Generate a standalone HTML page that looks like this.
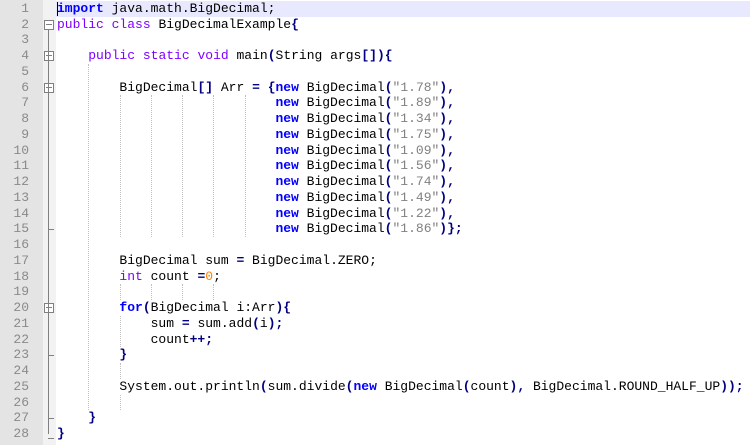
<!DOCTYPE html>
<html><head><style>
body{margin:0;width:750px;height:445px;overflow:hidden;background:#fff;position:relative;font-family:"Liberation Mono",monospace;font-size:13px;}
#nums{position:absolute;left:0;top:0;width:43px;height:445px;background:#e4e4e4;}
#fold{position:absolute;left:43px;top:0;width:13px;height:445px;background:#f2f2f2;}
.ln{position:absolute;left:0;width:29px;text-align:right;color:#8a8a8a;font-size:13px;line-height:15.74px;font-family:"Liberation Mono",monospace;}
.l{position:absolute;left:57px;white-space:pre;line-height:15.74px;color:#000;}
.k{color:#0000ff;font-weight:bold}
.t{color:#8000ff}
.s{color:#808080}
.n{color:#ff8000}
.o{color:#000080;font-weight:bold}
.box{position:absolute;left:44px;width:8px;height:8px;border:1px solid #808080;background:#fff;}
.box:after{content:"";position:absolute;left:1px;top:3px;width:6px;height:1px;background:#808080;}
.vl{position:absolute;left:48px;width:1px;background:#808080;}
.hl{position:absolute;left:48px;width:6px;height:1px;background:#808080;}
.g{position:absolute;width:0;border-left:1px dotted #c0c0c0;}
</style></head><body>
<div id="nums"></div><div id="fold"></div>
<div style="position:absolute;left:56px;top:1px;width:694px;height:16px;background:#e8e8ff"></div>
<div style="position:absolute;left:57px;top:2px;width:1px;height:14px;background:#000"></div>
<div id="c"></div>
<script>
var lines=[
'<span class="k">import</span> java.math.BigDecimal;',
'<span class="t">public</span> <span class="t">class</span> BigDecimalExample<span class="o">{</span>',
'',
'    <span class="t">public</span> <span class="t">static</span> <span class="t">void</span> main<span class="o">(</span>String args<span class="o">[])</span><span class="o">{</span>',
'',
'        BigDecimal<span class="o">[]</span> Arr <span class="o">=</span> <span class="o">{</span><span class="k">new</span> BigDecimal<span class="o">(</span><span class="s">"1.78"</span><span class="o">),</span>'];
var v=["1.89","1.34","1.75","1.09","1.56","1.74","1.49","1.22"];
v.forEach(function(x){lines.push('                            <span class="k">new</span> BigDecimal<span class="o">(</span><span class="s">"'+x+'"</span><span class="o">),</span>');});
lines.push('                            <span class="k">new</span> BigDecimal<span class="o">(</span><span class="s">"1.86"</span><span class="o">)};</span>');
lines=lines.concat(['',
'        BigDecimal sum <span class="o">=</span> BigDecimal.ZERO;',
'        <span class="t">int</span> count <span class="o">=</span><span class="n">0</span>;',
'',
'        <span class="k">for</span><span class="o">(</span>BigDecimal i:Arr<span class="o">){</span>',
'            sum <span class="o">=</span> sum.add<span class="o">(</span>i<span class="o">);</span>',
'            count<span class="o">++;</span>',
'        <span class="o">}</span>',
'',
'        System.out.println<span class="o">(</span>sum.divide<span class="o">(</span><span class="k">new</span> BigDecimal<span class="o">(</span>count<span class="o">),</span> BigDecimal.ROUND_HALF_UP<span class="o">));</span>',
'',
'    <span class="o">}</span>',
'<span class="o">}</span>']);
var h='',LH=15.74,T=1;
for(var i=0;i<lines.length;i++){var y=T+i*LH;
h+='<div class="ln" style="top:'+y+'px">'+(i+1)+'</div><div class="l" style="top:'+y+'px">'+lines[i]+'</div>';}
[2,4,6,20].forEach(function(n){h+='<div class="box" style="top:'+(T+(n-1)*LH+3)+'px"></div>';});
h+='<div class="vl" style="top:'+(T+LH+13)+'px;height:'+(27*LH-13-8)+'px"></div>';
[15,23,27].forEach(function(n){h+='<div class="hl" style="top:'+(T+(n-1)*LH+8)+'px"></div>';});
h+='<div class="hl" style="top:'+(T+27*LH+12)+'px"></div>';
function g(col,a,b){h+='<div class="g" style="left:'+(57+col*7.82)+'px;top:'+(T+(a-1)*LH)+'px;height:'+((b-a+1)*LH)+'px"></div>';}
g(4,5,26);g(8,7,15);g(12,7,15);g(16,7,15);g(20,7,15);g(24,7,15);
g(8,19,19);g(12,19,19);g(16,19,19);g(20,19,19);g(8,21,22);g(8,24,24);g(8,26,26);
document.getElementById('c').innerHTML=h;
</script>
</body></html>
